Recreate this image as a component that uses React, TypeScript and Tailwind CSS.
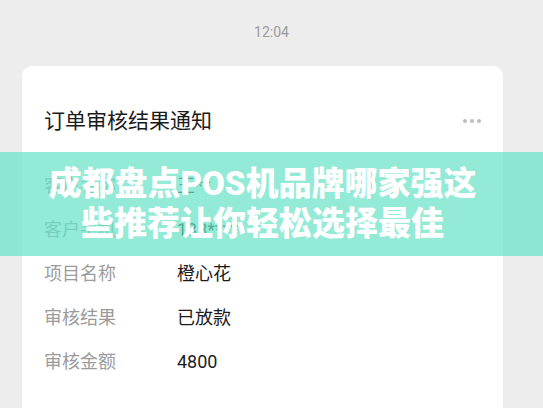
const rows = [
  { label: "客户名称", value: "王**" },
  { label: "客户手机", value: "138****" },
  { label: "项目名称", value: "橙心花" },
  { label: "审核结果", value: "已放款" },
  { label: "审核金额", value: "4800" },
];

export default function App() {
  return (
    <div
      className="relative h-[408px] w-[543px] overflow-hidden bg-[#ededed]"
      style={{ fontFamily: 'Roboto, "Noto Sans CJK SC", sans-serif' }}
    >
      <div className="pt-[23px] text-center text-[14px] leading-[18px] text-[#9a9a9a]">12:04</div>

      <div className="ml-[22px] mt-[25px] h-[400px] w-[481px] rounded-[10px] bg-white px-[22px] pt-[40px]">
        <div className="flex items-center justify-between">
          <div className="text-[21px] leading-[30px] text-[#1b1b1b]">订单审核结果通知</div>
          <div className="flex gap-[3px]">
            <span className="h-[4px] w-[4px] rounded-full bg-[#bdbdbd]" />
            <span className="h-[4px] w-[4px] rounded-full bg-[#bdbdbd]" />
            <span className="h-[4px] w-[4px] rounded-full bg-[#bdbdbd]" />
          </div>
        </div>

        <div className="mt-[27px] flex flex-col">
          {rows.map((r) => (
            <div key={r.label} className="flex h-[44px] items-center text-[18px]">
              <span className="w-[133px] text-[#9b9b9b]">{r.label}</span>
              <span className="text-[#1b1b1b]">{r.value}</span>
            </div>
          ))}
        </div>
      </div>

      <div className="absolute left-0 top-[152px] flex h-[104px] w-full flex-col items-center justify-center bg-[rgba(105,226,198,0.72)] pr-[18px]">
        <div className="text-center text-[33px] font-black leading-[40px] text-white">
          <div>成都盘点POS机品牌哪家强这</div>
          <div>些推荐让你轻松选择最佳</div>
        </div>
      </div>
    </div>
  );
}
